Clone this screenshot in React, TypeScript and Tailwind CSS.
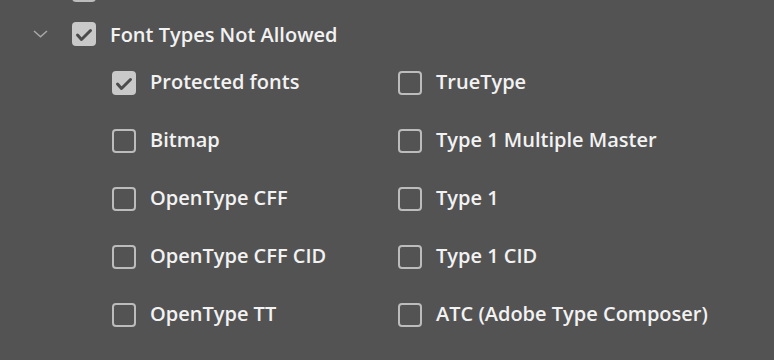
import React from "react";

function Box({ checked }: { checked?: boolean }) {
  if (checked) {
    return (
      <div className="w-[24px] h-[24px] shrink-0 rounded-[4px] bg-[#c9c9c9] flex items-center justify-center">
        <svg width="24" height="24" viewBox="0 0 24 24">
          <polyline points="5.5,13 9.5,17.5 18.5,8.5" fill="none" stroke="#4b4b4b" strokeWidth="3" strokeLinecap="round" strokeLinejoin="round" />
        </svg>
      </div>
    );
  }
  return <div className="w-[24px] h-[24px] shrink-0 rounded-[4px] border-2 border-[#bcbcbc]" />;
}

const items: [string, boolean][] = [
  ["Protected fonts", true],
  ["TrueType", false],
  ["Bitmap", false],
  ["Type 1 Multiple Master", false],
  ["OpenType CFF", false],
  ["Type 1", false],
  ["OpenType CFF CID", false],
  ["Type 1 CID", false],
  ["OpenType TT", false],
  ["ATC (Adobe Type Composer)", false],
];

export default function App() {
  return (
    <div
      className="w-[774px] h-[360px] overflow-hidden bg-[#535353] text-[#f2f2f2] text-[20px] font-semibold"
      style={{ fontFamily: '"Open Sans", "DejaVu Sans", sans-serif' }}
    >
      <div className="flex flex-col mt-[-32px]">
        <div className="h-[44px] flex items-center pl-[72px] gap-[14px]">
          <Box />
          <span className="leading-none mt-[-8px]">Dynamic Spelling Detects Errors</span>
        </div>
        <div className="h-[44px] flex items-center pl-[33px]">
          <svg width="16" height="8" viewBox="0 0 16 8" className="mr-[23px]">
            <polyline points="1,1 7.5,6.8 14,1" fill="none" stroke="#a8a8a8" strokeWidth="1.5" />
          </svg>
          <Box checked />
          <span className="ml-[14px] leading-none mt-[2px]">Font Types Not Allowed</span>
        </div>
        <div className="grid grid-cols-[286px_1fr] gap-y-[14px] pl-[112px] mt-[5px]">
          {items.map(([label, c]) => (
            <div key={label} className="h-[44px] flex items-center gap-[14px]">
              <Box checked={c} />
              <span className="leading-none mt-[-3px]">{label}</span>
            </div>
          ))}
        </div>
      </div>
    </div>
  );
}
